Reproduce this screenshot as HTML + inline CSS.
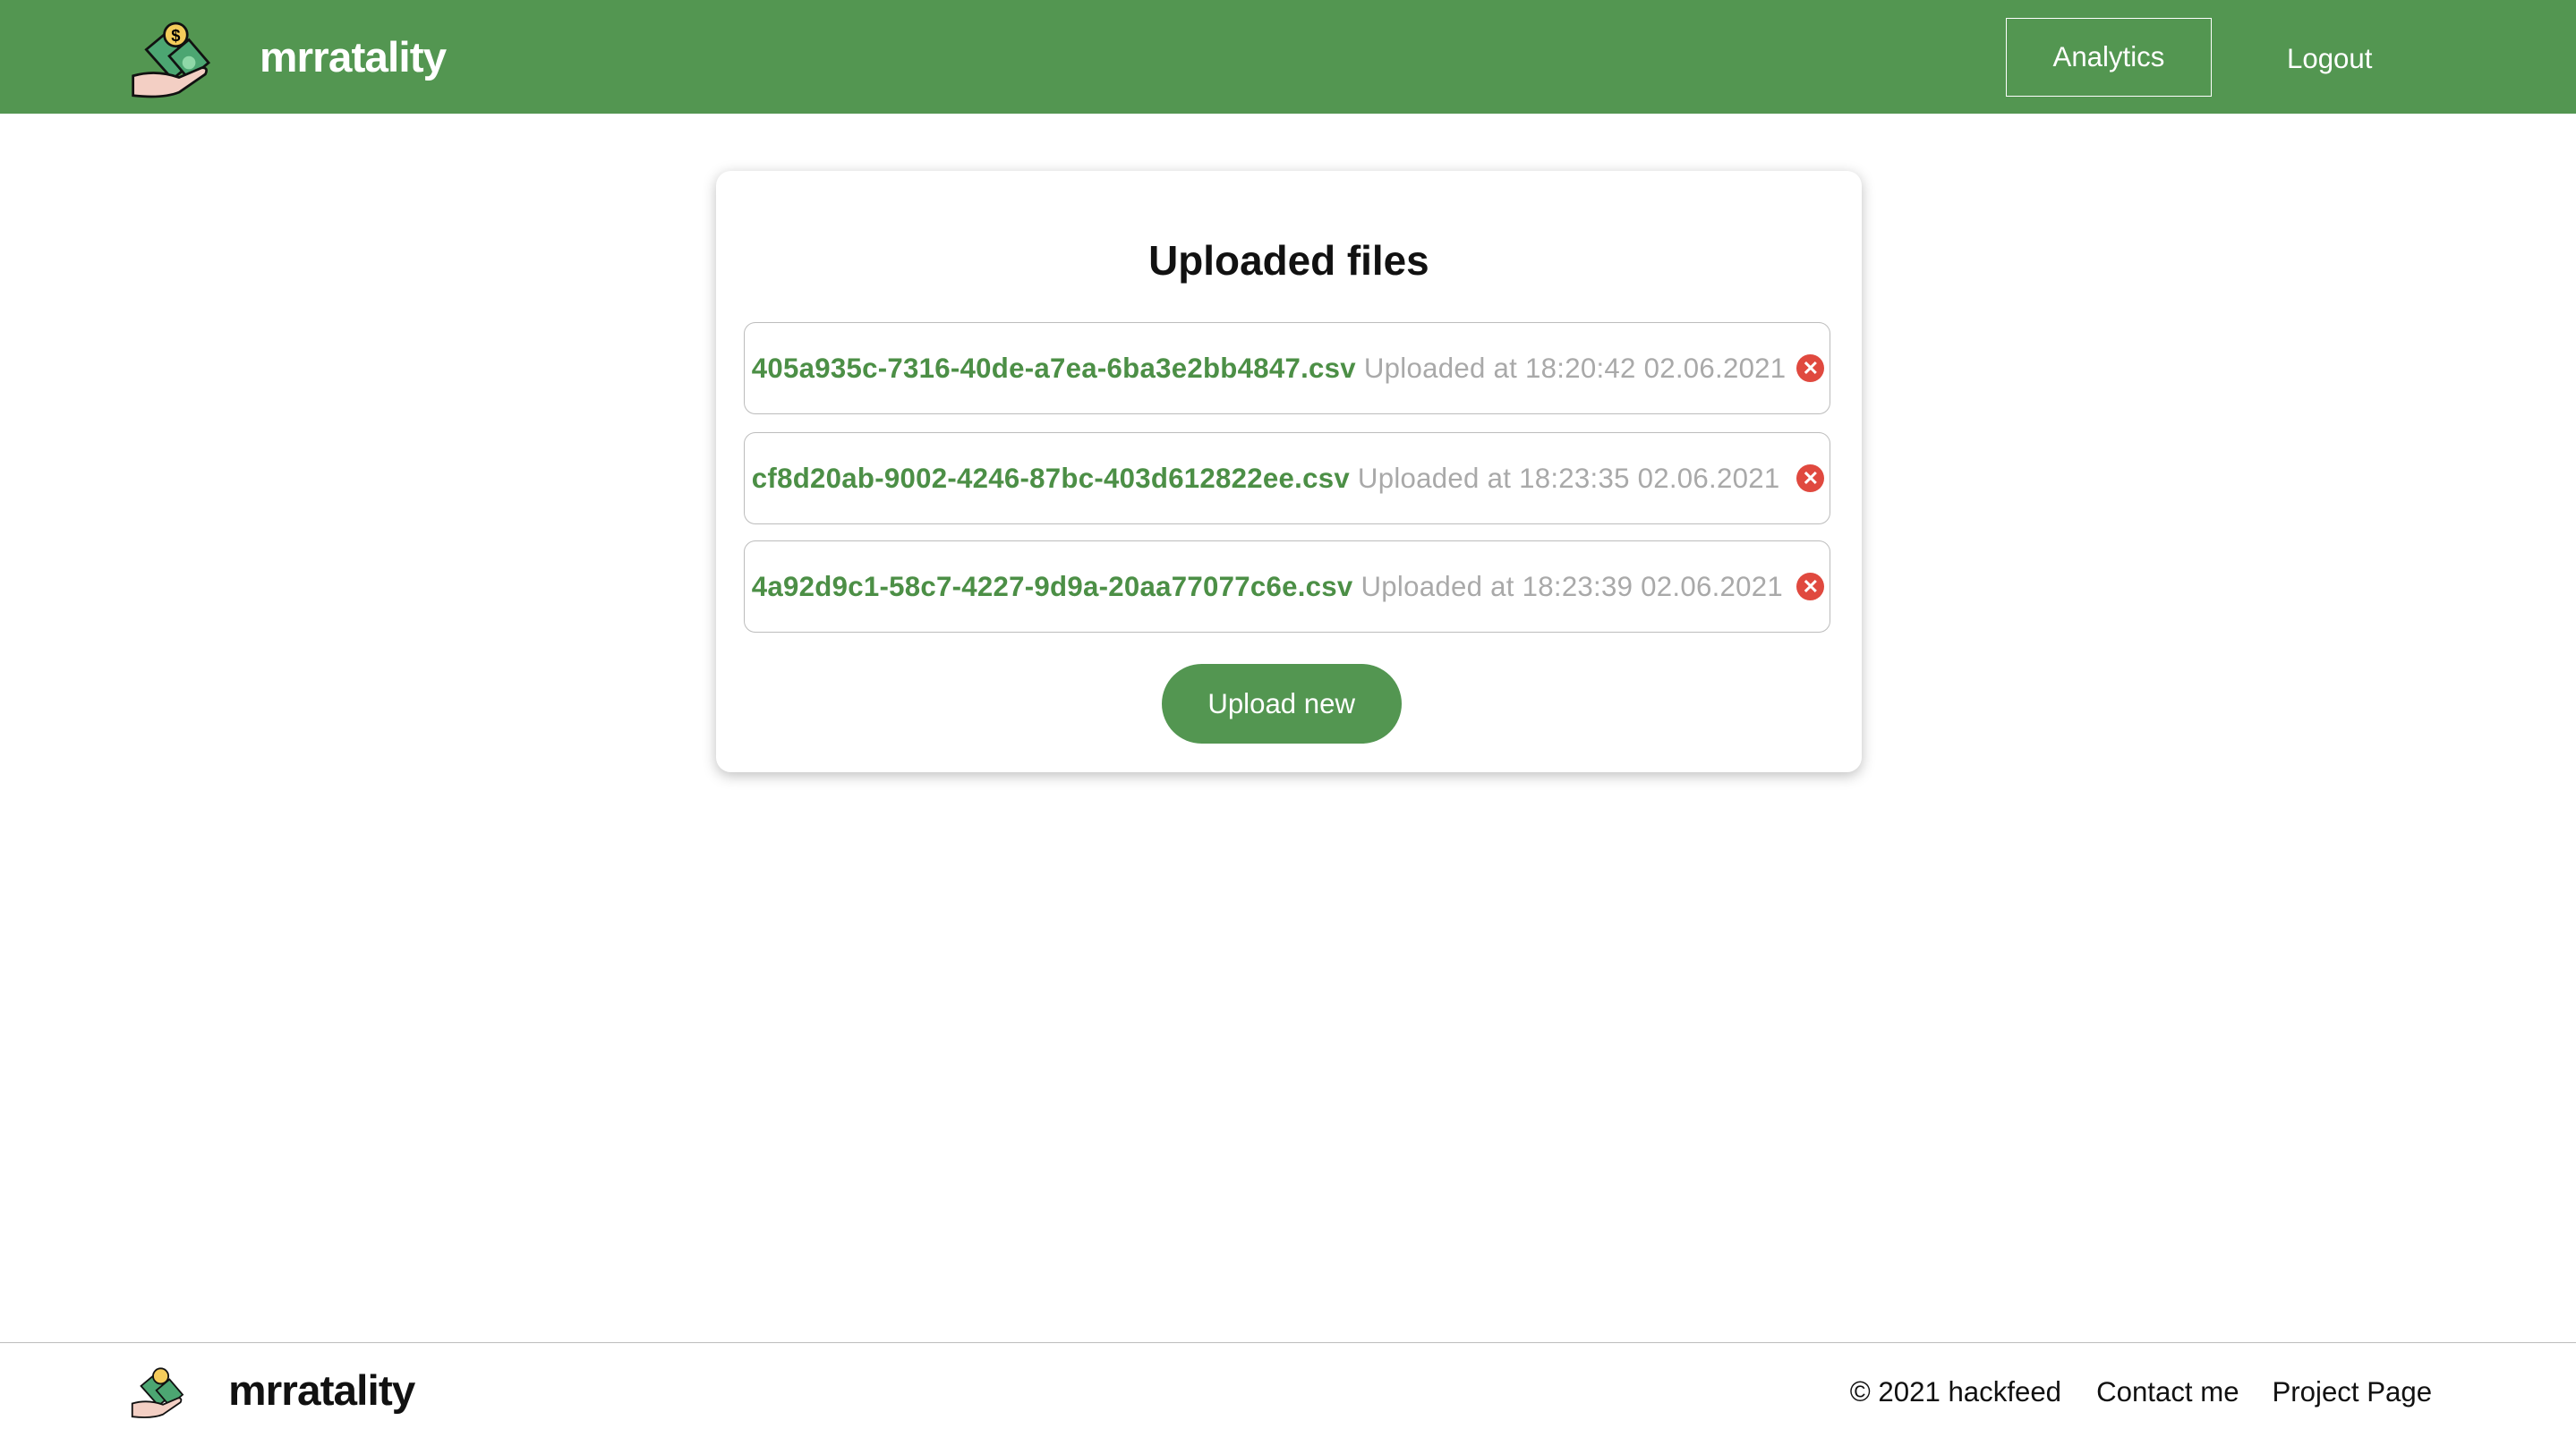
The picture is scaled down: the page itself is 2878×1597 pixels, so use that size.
<!DOCTYPE html>
<html><head><meta charset="utf-8"><style>
html,body{margin:0;padding:0;background:#fff;}
body{width:1568px;height:870px;zoom:1.8355;position:relative;overflow:hidden;font-family:"Liberation Sans",Arial,sans-serif;}
.hdr{position:absolute;left:0;top:0;width:1568px;height:69px;background:#539651;}
.brand{position:absolute;left:158px;top:20px;color:#fff;font-weight:bold;font-size:26px;letter-spacing:-0.5px;}
.an{position:absolute;left:1221px;top:11px;width:124px;height:47px;border:1px solid #fff;color:#fff;font-size:17px;line-height:47px;text-align:center;}
.lo{position:absolute;left:1392px;top:26px;color:#fff;font-size:17px;}
.card{position:absolute;left:436px;top:104px;width:697px;height:366px;border-radius:9px;box-shadow:0 2px 8px rgba(0,0,0,.25);background:#fff;}
.row{position:absolute;left:453px;width:660px;height:55px;border:1px solid #bcbcbc;border-radius:7px;}
.row span.t{position:absolute;left:4px;top:18px;font-size:17px;white-space:nowrap;letter-spacing:0.15px;}
.g{color:#4c8f46;font-weight:bold;}
.gr{color:#a9a9a9;}
.x{position:absolute;left:640px;top:19px;width:17px;height:17px;border-radius:50%;background:#e0493f;color:#fff;font-size:12px;line-height:17px;text-align:center;font-weight:bold;}
.btn{position:absolute;left:707px;top:404px;width:146px;height:49px;border-radius:25px;background:#539651;color:#fff;font-size:17px;line-height:49px;text-align:center;}
.fl{position:absolute;left:0;top:817px;width:1568px;height:1px;background:#bdbdbd;}
.fb{position:absolute;left:139px;top:832px;font-size:26px;font-weight:bold;color:#111;letter-spacing:-0.5px;}
.fk{position:absolute;top:838px;font-size:17px;color:#111;}
</style></head><body>
<div class="hdr">
<svg style="position:absolute;left:79px;top:8px" width="52" height="54" viewBox="0 0 52 54">
<path d="M10 22 L22 12 L38 30 L26 40Z" fill="#4ca672" stroke="#111" stroke-width="1.5"/>
<path d="M24 26 L36 16 L48 30 L36 40Z" fill="#4ca672" stroke="#111" stroke-width="1.5"/>
<circle cx="36" cy="30" r="4" fill="#8fd8a8"/>
<circle cx="28" cy="13" r="7" fill="#f4cc5b" stroke="#111" stroke-width="1.5"/>
<text x="28" y="17" font-size="10" font-weight="bold" text-anchor="middle" font-family="Liberation Sans">$</text>
<path d="M2 38 Q16 34 30 39 L44 33 Q48 33 46 37 L30 48 Q20 52 2 50Z" fill="#f3cfc4" stroke="#111" stroke-width="1.5"/>
</svg>
<div class="brand">mrratality</div>
<div class="an">Analytics</div>
<div class="lo">Logout</div>
</div>
<div class="card"></div>
<div style="position:absolute;left:436px;top:144px;width:697px;text-align:center;font-size:25px;font-weight:bold;color:#111">Uploaded files</div>
<div class="row" style="top:196px"><span class="t"><span class="g">405a935c-7316-40de-a7ea-6ba3e2bb4847.csv</span> <span class="gr">Uploaded at 18:20:42 02.06.2021</span></span><div class="x">✕</div></div>
<div class="row" style="top:263px"><span class="t"><span class="g">cf8d20ab-9002-4246-87bc-403d612822ee.csv</span> <span class="gr">Uploaded at 18:23:35 02.06.2021</span></span><div class="x">✕</div></div>
<div class="row" style="top:329px"><span class="t"><span class="g">4a92d9c1-58c7-4227-9d9a-20aa77077c6e.csv</span> <span class="gr">Uploaded at 18:23:39 02.06.2021</span></span><div class="x">✕</div></div>
<div class="btn">Upload new</div>
<div class="fl"></div>
<svg style="position:absolute;left:79px;top:829px" width="35" height="36" viewBox="0 0 52 54">
<path d="M10 22 L22 12 L38 30 L26 40Z" fill="#4ca672" stroke="#111" stroke-width="1.5"/>
<path d="M24 26 L36 16 L48 30 L36 40Z" fill="#4ca672" stroke="#111" stroke-width="1.5"/>
<circle cx="28" cy="13" r="7" fill="#f4cc5b" stroke="#111" stroke-width="1.5"/>
<path d="M2 38 Q16 34 30 39 L44 33 Q48 33 46 37 L30 48 Q20 52 2 50Z" fill="#f3cfc4" stroke="#111" stroke-width="1.5"/>
</svg>
<div class="fb">mrratality</div>
<div class="fk" style="left:1126px">© 2021 hackfeed</div>
<div class="fk" style="left:1276px">Contact me</div>
<div class="fk" style="left:1383px">Project Page</div>
</body></html>
